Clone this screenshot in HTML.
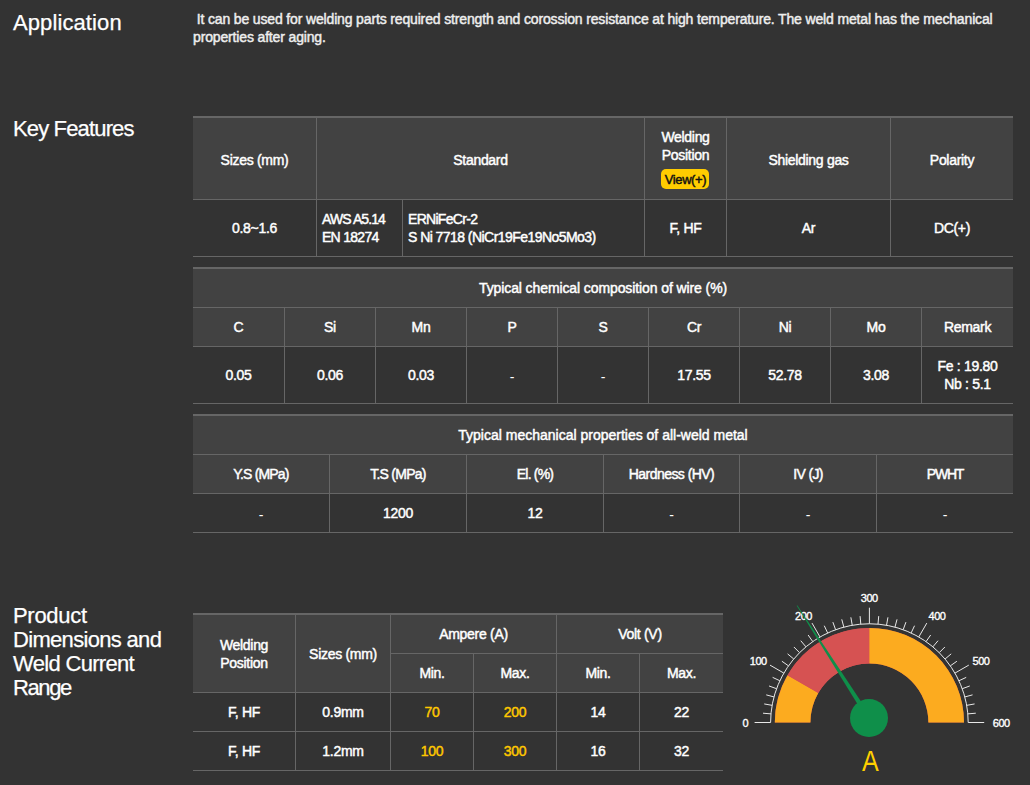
<!DOCTYPE html>
<html><head><meta charset="utf-8"><title>Product</title>
<style>
html,body{margin:0;padding:0}
body{width:1030px;height:785px;background:#333333;position:relative;overflow:hidden;font-family:"Liberation Sans",sans-serif;color:#fff}
.r{position:absolute}
svg.g{position:absolute;left:730px;top:580px}
.gl{font-size:11px;fill:#fff;stroke:#fff;stroke-width:0.35px;letter-spacing:-0.5px;font-family:"Liberation Sans",sans-serif}
.ga{font-size:29.4px;fill:#ffd000;font-family:"Liberation Sans",sans-serif}
.c{position:absolute;display:flex;align-items:center;justify-content:center;text-align:center;font-size:14px;line-height:18px;letter-spacing:-0.3px;box-sizing:border-box;-webkit-text-stroke-width:0.45px}
.c.l{justify-content:flex-start;text-align:left;padding-left:5px}
.c.y{color:#ffc800}
.d{-webkit-text-stroke-width:0;position:relative;top:2px}
.c.wp{align-items:flex-start}
.btn{display:inline-block;vertical-align:top;background:#ffcc00;color:#111;border-radius:5px;width:48px;height:19px;padding-top:1px;line-height:20px;margin-top:5px;font-size:13px;letter-spacing:-0.4px}
h2{position:absolute;margin:0;font-weight:normal;font-size:22px;line-height:24px;color:#fff;-webkit-text-stroke-width:0.25px}
p.app{position:absolute;margin:0;left:193px;top:10px;width:820px;font-size:14px;line-height:18px;color:#eee;letter-spacing:-0.15px;-webkit-text-stroke-width:0.45px}
</style></head><body>
<h2 style="left:13px;top:11px;letter-spacing:0.1px">Application</h2>
<p class="app">&nbsp;It can be used for welding parts required strength and corossion resistance at high temperature. The weld metal has the mechanical properties after aging.</p>
<h2 style="left:13px;top:117px;letter-spacing:-0.85px">Key Features</h2>
<h2 style="left:13px;top:604px;letter-spacing:-0.68px"><span style="letter-spacing:-0.3px">Product</span><br>Dimensions and<br>Weld Current<br><span style="letter-spacing:-1.4px">Range</span></h2>
<div class="r" style="left:193px;top:118px;width:820px;height:81px;background:#424242"></div>
<div class="r" style="left:193px;top:116px;width:820px;height:2px;background:#666666"></div>
<div class="r" style="left:193px;top:199px;width:820px;height:1px;background:#666666"></div>
<div class="r" style="left:193px;top:256px;width:820px;height:1px;background:#666666"></div>
<div class="r" style="left:316px;top:118px;width:1px;height:138px;background:#666666"></div>
<div class="r" style="left:644px;top:118px;width:1px;height:138px;background:#666666"></div>
<div class="r" style="left:726px;top:118px;width:1px;height:138px;background:#666666"></div>
<div class="r" style="left:890px;top:118px;width:1px;height:138px;background:#666666"></div>
<div class="r" style="left:402px;top:200px;width:1px;height:56px;background:#666666"></div>
<div class="c" style="left:193px;top:119px;width:123px;height:81px;"><div>Sizes (mm)</div></div>
<div class="c" style="left:317px;top:119px;width:327px;height:81px;"><div>Standard</div></div>
<div class="c" style="left:727px;top:119px;width:163px;height:81px;"><div>Shielding gas</div></div>
<div class="c" style="left:891px;top:119px;width:122px;height:81px;"><div>Polarity</div></div>
<div class="c wp" style="left:645px;top:128px;width:81px;height:71px"><div>Welding<br>Position<br><span class="btn">View(+)</span></div></div>
<div class="c" style="left:193px;top:200px;width:123px;height:56px;"><div>0.8~1.6</div></div>
<div class="c l" style="left:317px;top:200px;width:85px;height:56px;"><div><span style="letter-spacing:-0.9px">AWS A5.14</span><br><span style="letter-spacing:-0.72px">EN 18274</span></div></div>
<div class="c l" style="left:403px;top:200px;width:241px;height:56px;"><div><span style="letter-spacing:-0.7px">ERNiFeCr-2</span><br><span style="letter-spacing:-0.55px">S Ni 7718 (NiCr19Fe19No5Mo3)</span></div></div>
<div class="c" style="left:645px;top:200px;width:81px;height:56px;"><div>F, HF</div></div>
<div class="c" style="left:727px;top:200px;width:163px;height:56px;"><div>Ar</div></div>
<div class="c" style="left:891px;top:200px;width:122px;height:56px;"><div>DC(+)</div></div>
<div class="r" style="left:193px;top:269px;width:820px;height:77px;background:#424242"></div>
<div class="r" style="left:193px;top:267px;width:820px;height:2px;background:#666666"></div>
<div class="r" style="left:193px;top:307px;width:820px;height:1px;background:#666666"></div>
<div class="r" style="left:193px;top:346px;width:820px;height:1px;background:#666666"></div>
<div class="r" style="left:193px;top:403px;width:820px;height:1px;background:#666666"></div>
<div class="r" style="left:284px;top:308px;width:1px;height:95px;background:#666666"></div>
<div class="r" style="left:375px;top:308px;width:1px;height:95px;background:#666666"></div>
<div class="r" style="left:466px;top:308px;width:1px;height:95px;background:#666666"></div>
<div class="r" style="left:557px;top:308px;width:1px;height:95px;background:#666666"></div>
<div class="r" style="left:648px;top:308px;width:1px;height:95px;background:#666666"></div>
<div class="r" style="left:739px;top:308px;width:1px;height:95px;background:#666666"></div>
<div class="r" style="left:830px;top:308px;width:1px;height:95px;background:#666666"></div>
<div class="r" style="left:921px;top:308px;width:1px;height:95px;background:#666666"></div>
<div class="c" style="left:193px;top:269px;width:820px;height:38px;letter-spacing:-0.1px"><div>Typical chemical composition of wire (%)</div></div>
<div class="c" style="left:193px;top:308px;width:91px;height:38px;"><div>C</div></div>
<div class="c" style="left:193px;top:347px;width:91px;height:56px;"><div>0.05</div></div>
<div class="c" style="left:285px;top:308px;width:90px;height:38px;"><div>Si</div></div>
<div class="c" style="left:285px;top:347px;width:90px;height:56px;"><div>0.06</div></div>
<div class="c" style="left:376px;top:308px;width:90px;height:38px;"><div>Mn</div></div>
<div class="c" style="left:376px;top:347px;width:90px;height:56px;"><div>0.03</div></div>
<div class="c" style="left:467px;top:308px;width:90px;height:38px;"><div>P</div></div>
<div class="c" style="left:467px;top:347px;width:90px;height:56px;"><div><span class="d">-</span></div></div>
<div class="c" style="left:558px;top:308px;width:90px;height:38px;"><div>S</div></div>
<div class="c" style="left:558px;top:347px;width:90px;height:56px;"><div><span class="d">-</span></div></div>
<div class="c" style="left:649px;top:308px;width:90px;height:38px;"><div>Cr</div></div>
<div class="c" style="left:649px;top:347px;width:90px;height:56px;"><div>17.55</div></div>
<div class="c" style="left:740px;top:308px;width:90px;height:38px;"><div>Ni</div></div>
<div class="c" style="left:740px;top:347px;width:90px;height:56px;"><div>52.78</div></div>
<div class="c" style="left:831px;top:308px;width:90px;height:38px;"><div>Mo</div></div>
<div class="c" style="left:831px;top:347px;width:90px;height:56px;"><div>3.08</div></div>
<div class="c" style="left:922px;top:308px;width:91px;height:38px;"><div>Remark</div></div>
<div class="c" style="left:922px;top:347px;width:91px;height:56px;"><div>Fe : 19.80<br>Nb : 5.1</div></div>
<div class="r" style="left:193px;top:416px;width:820px;height:77px;background:#424242"></div>
<div class="r" style="left:193px;top:414px;width:820px;height:2px;background:#666666"></div>
<div class="r" style="left:193px;top:454px;width:820px;height:1px;background:#666666"></div>
<div class="r" style="left:193px;top:493px;width:820px;height:1px;background:#666666"></div>
<div class="r" style="left:193px;top:532px;width:820px;height:1px;background:#666666"></div>
<div class="r" style="left:329px;top:455px;width:1px;height:77px;background:#666666"></div>
<div class="r" style="left:466px;top:455px;width:1px;height:77px;background:#666666"></div>
<div class="r" style="left:603px;top:455px;width:1px;height:77px;background:#666666"></div>
<div class="r" style="left:739px;top:455px;width:1px;height:77px;background:#666666"></div>
<div class="r" style="left:876px;top:455px;width:1px;height:77px;background:#666666"></div>
<div class="c" style="left:193px;top:416px;width:820px;height:38px;letter-spacing:0px"><div>Typical mechanical properties of all-weld metal</div></div>
<div class="c" style="left:193px;top:455px;width:136px;height:38px;letter-spacing:-0.83px"><div>Y.S (MPa)</div></div>
<div class="c" style="left:193px;top:494px;width:136px;height:38px;"><div><span class="d">-</span></div></div>
<div class="c" style="left:330px;top:455px;width:136px;height:38px;letter-spacing:-0.74px"><div>T.S (MPa)</div></div>
<div class="c" style="left:330px;top:494px;width:136px;height:38px;"><div>1200</div></div>
<div class="c" style="left:467px;top:455px;width:136px;height:38px;letter-spacing:-0.8px"><div>El. (%)</div></div>
<div class="c" style="left:467px;top:494px;width:136px;height:38px;"><div>12</div></div>
<div class="c" style="left:604px;top:455px;width:135px;height:38px;letter-spacing:-0.55px"><div>Hardness (HV)</div></div>
<div class="c" style="left:604px;top:494px;width:135px;height:38px;"><div><span class="d">-</span></div></div>
<div class="c" style="left:740px;top:455px;width:136px;height:38px;letter-spacing:-0.65px"><div>IV (J)</div></div>
<div class="c" style="left:740px;top:494px;width:136px;height:38px;"><div><span class="d">-</span></div></div>
<div class="c" style="left:877px;top:455px;width:136px;height:38px;letter-spacing:-1.2px"><div>PWHT</div></div>
<div class="c" style="left:877px;top:494px;width:136px;height:38px;"><div><span class="d">-</span></div></div>
<div class="r" style="left:193px;top:615px;width:530px;height:77px;background:#424242"></div>
<div class="r" style="left:193px;top:613px;width:530px;height:2px;background:#666666"></div>
<div class="r" style="left:390px;top:653px;width:333px;height:1px;background:#666666"></div>
<div class="r" style="left:193px;top:692px;width:530px;height:1px;background:#666666"></div>
<div class="r" style="left:193px;top:731px;width:530px;height:1px;background:#666666"></div>
<div class="r" style="left:193px;top:770px;width:530px;height:1px;background:#666666"></div>
<div class="r" style="left:295px;top:615px;width:1px;height:155px;background:#666666"></div>
<div class="r" style="left:390px;top:615px;width:1px;height:155px;background:#666666"></div>
<div class="r" style="left:556px;top:615px;width:1px;height:155px;background:#666666"></div>
<div class="r" style="left:473px;top:654px;width:1px;height:116px;background:#666666"></div>
<div class="r" style="left:639px;top:654px;width:1px;height:116px;background:#666666"></div>
<div class="c" style="left:193px;top:615px;width:102px;height:77px;"><div>Welding<br>Position</div></div>
<div class="c" style="left:296px;top:615px;width:94px;height:77px;"><div>Sizes (mm)</div></div>
<div class="c" style="left:391px;top:615px;width:165px;height:38px;"><div>Ampere (A)</div></div>
<div class="c" style="left:557px;top:615px;width:166px;height:38px;"><div>Volt (V)</div></div>
<div class="c" style="left:391px;top:654px;width:82px;height:38px;"><div>Min.</div></div>
<div class="c" style="left:474px;top:654px;width:82px;height:38px;"><div>Max.</div></div>
<div class="c" style="left:557px;top:654px;width:82px;height:38px;"><div>Min.</div></div>
<div class="c" style="left:640px;top:654px;width:83px;height:38px;"><div>Max.</div></div>
<div class="c" style="left:193px;top:693px;width:102px;height:38px;"><div>F, HF</div></div>
<div class="c" style="left:296px;top:693px;width:94px;height:38px;"><div>0.9mm</div></div>
<div class="c y" style="left:391px;top:693px;width:82px;height:38px;"><div>70</div></div>
<div class="c y" style="left:474px;top:693px;width:82px;height:38px;"><div>200</div></div>
<div class="c" style="left:557px;top:693px;width:82px;height:38px;"><div>14</div></div>
<div class="c" style="left:640px;top:693px;width:83px;height:38px;"><div>22</div></div>
<div class="c" style="left:193px;top:732px;width:102px;height:38px;"><div>F, HF</div></div>
<div class="c" style="left:296px;top:732px;width:94px;height:38px;"><div>1.2mm</div></div>
<div class="c y" style="left:391px;top:732px;width:82px;height:38px;"><div>100</div></div>
<div class="c y" style="left:474px;top:732px;width:82px;height:38px;"><div>300</div></div>
<div class="c" style="left:557px;top:732px;width:82px;height:38px;"><div>16</div></div>
<div class="c" style="left:640px;top:732px;width:83px;height:38px;"><div>32</div></div>
<svg class="g" width="300" height="205" viewBox="730 580 300 205"><path d="M774.80,722.50 A94.6,94.6 0 0 1 964.00,722.50 L928.40,722.50 A59,59 0 0 0 810.40,722.50 Z" fill="#d65252"/><path d="M774.80,722.50 A94.6,94.6 0 0 1 787.47,675.20 L818.30,693.00 A59,59 0 0 0 810.40,722.50 Z" fill="#fcab1f"/><path d="M787.47,675.20 A94.6,94.6 0 0 1 869.40,627.90 L869.40,663.50 A59,59 0 0 0 818.30,693.00 Z" fill="#d65252"/><path d="M869.40,627.90 A94.6,94.6 0 0 1 964.00,722.50 L928.40,722.50 A59,59 0 0 0 869.40,663.50 Z" fill="#fcab1f"/><path d="M770.60,722.50 A98.8,98.8 0 0 1 968.20,722.50" fill="none" stroke="#e8e8e8" stroke-width="1"/><path d="M770.60,722.50L754.60,722.50M770.98,713.89L763.01,713.19M772.10,705.34L764.22,703.95M773.97,696.93L766.24,694.86M776.56,688.71L769.04,685.97M779.86,680.75L772.61,677.36M783.84,673.10L769.98,665.10M788.47,665.83L781.91,661.24M793.71,658.99L787.59,653.85M799.54,652.64L793.88,646.98M805.89,646.81L800.75,640.69M812.73,641.57L808.14,635.01M820.00,636.94L812.00,623.08M827.65,632.96L824.26,625.71M835.61,629.66L832.87,622.14M843.83,627.07L841.76,619.34M852.24,625.20L850.85,617.32M860.79,624.08L860.09,616.11M869.40,623.70L869.40,607.70M878.01,624.08L878.71,616.11M886.56,625.20L887.95,617.32M894.97,627.07L897.04,619.34M903.19,629.66L905.93,622.14M911.15,632.96L914.54,625.71M918.80,636.94L926.80,623.08M926.07,641.57L930.66,635.01M932.91,646.81L938.05,640.69M939.26,652.64L944.92,646.98M945.09,658.99L951.21,653.85M950.33,665.83L956.89,661.24M954.96,673.10L968.82,665.10M958.94,680.75L966.19,677.36M962.24,688.71L969.76,685.97M964.83,696.93L972.56,694.86M966.70,705.34L974.58,703.95M967.82,713.89L975.79,713.19M968.20,722.50L984.20,722.50" stroke="#e8e8e8" stroke-width="1" fill="none"/><text x="745.3" y="727" text-anchor="middle" class="gl">0</text><text x="758.2" y="665.2" text-anchor="middle" class="gl">100</text><text x="803.5" y="620.4" text-anchor="middle" class="gl">200</text><text x="869.3" y="602.4" text-anchor="middle" class="gl">300</text><text x="937" y="620.4" text-anchor="middle" class="gl">400</text><text x="981" y="665.2" text-anchor="middle" class="gl">500</text><text x="1001.2" y="727" text-anchor="middle" class="gl">600</text><path d="M871.11,716.65 L797.25,605.34 L796.75,605.66 L866.89,719.35 Z" fill="#0f8f4a"/><circle cx="869.0" cy="718.0" r="19" fill="#0f8f4a"/><text x="0" y="0" transform="translate(870.4,771) scale(0.853,1)" text-anchor="middle" class="ga">A</text></svg>
</body></html>
